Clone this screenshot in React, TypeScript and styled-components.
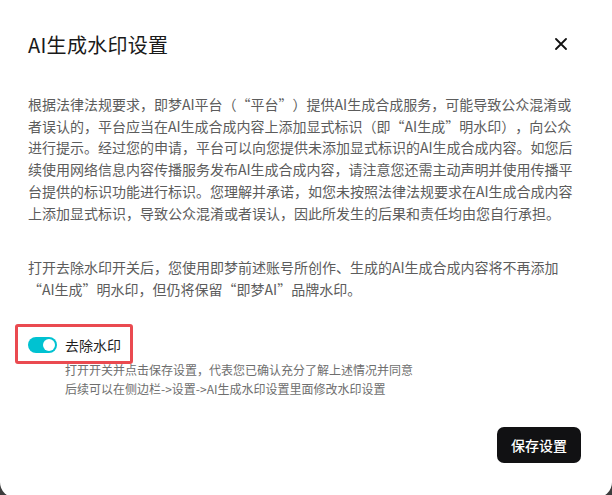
import React, { useState } from "react";
import styled, { createGlobalStyle } from "styled-components";

const GlobalStyle = createGlobalStyle`
  html, body {
    margin: 0;
    padding: 0;
    background: #3c3c3c;
  }
  body {
    font-family: "Noto Sans CJK SC", "Liberation Sans", sans-serif;
    text-spacing-trim: space-all;
  }
`;

const Dialog = styled.div`
  width: 612px;
  height: 498px;
  box-sizing: border-box;
  background: #fff;
  border-radius: 0 0 16px 16px;
  padding: 24px 28px 0 28px;
  display: flex;
  flex-direction: column;
`;

const Header = styled.div`
  display: flex;
  align-items: center;
  justify-content: space-between;
  height: 40px;
`;

const Title = styled.h1`
  margin: 0;
  font-size: 20px;
  font-weight: 400;
  color: #1a1a1a;
  letter-spacing: 0.3px;
`;

const CloseButton = styled.button`
  border: none;
  background: transparent;
  padding: 0;
  width: 24px;
  height: 24px;
  margin-right: 11px;
  display: flex;
  align-items: center;
  justify-content: center;
  cursor: pointer;
  color: #111;
`;

const Body = styled.div`
  margin-top: 30px;
  display: flex;
  flex-direction: column;
  gap: 33px;
`;

const Paragraph = styled.p`
  margin: 0;
  font-size: 14px;
  line-height: 21.7px;
  color: #5c5c5c;
  white-space: nowrap;
`;

const ToggleSection = styled.div`
  margin-top: 32px;
  display: flex;
  flex-direction: column;
`;

const Highlight = styled.div`
  position: relative;
  display: flex;
  align-items: center;
  gap: 8px;
  height: 24px;
`;

const HighlightFrame = styled.div`
  position: absolute;
  left: -13px;
  top: -9px;
  width: 118px;
  height: 40px;
  box-sizing: border-box;
  border: 3px solid #ea4a50;
  border-radius: 3px;
  pointer-events: none;
`;

const Switch = styled.button<{ $on: boolean }>`
  position: relative;
  width: 29px;
  height: 16px;
  border: none;
  padding: 0;
  border-radius: 8px;
  background: ${(p) => (p.$on ? "#00c2d1" : "#c9c9c9")};
  cursor: pointer;
`;

const Knob = styled.span<{ $on: boolean }>`
  position: absolute;
  top: 2px;
  left: ${(p) => (p.$on ? "15px" : "2px")};
  width: 12px;
  height: 12px;
  border-radius: 50%;
  background: #fff;
`;

const SwitchLabel = styled.span`
  font-size: 14px;
  color: #1f1f1f;
`;

const Hint = styled.div`
  margin-left: 37px;
  margin-top: 3px;
  font-size: 12px;
  line-height: 19px;
  color: #6e6e6e;
  white-space: nowrap;
`;

const Footer = styled.div`
  margin-top: auto;
  margin-bottom: 35px;
  display: flex;
  justify-content: flex-end;
  padding-right: 3px;
`;

const SaveButton = styled.button`
  width: 84px;
  height: 36px;
  border: none;
  border-radius: 7px;
  background: #111113;
  color: #fff;
  font-family: "Noto Sans CJK SC", sans-serif;
  font-size: 14px;
  font-weight: 500;
  cursor: pointer;
`;

export default function App() {
  const [on, setOn] = useState(true);

  return (
    <>
      <GlobalStyle />
      <Dialog>
        <Header>
          <Title>AI生成水印设置</Title>
          <CloseButton aria-label="关闭">
            <svg width="12" height="12" viewBox="0 0 12 12">
              <path d="M1 1 L11 11 M11 1 L1 11" stroke="currentColor" strokeWidth="1.8" strokeLinecap="round" />
            </svg>
          </CloseButton>
        </Header>
        <Body>
          <Paragraph>
            根据法律法规要求，即梦AI平台（“平台”）提供AI生成合成服务，可能导致公众混淆或
            <br />
            者误认的，平台应当在AI生成合成内容上添加显式标识（即“AI生成”明水印），向公众
            <br />
            进行提示。经过您的申请，平台可以向您提供未添加显式标识的AI生成合成内容。如您后
            <br />
            续使用网络信息内容传播服务发布AI生成合成内容，请注意您还需主动声明并使用传播平
            <br />
            台提供的标识功能进行标识。您理解并承诺，如您未按照法律法规要求在AI生成合成内容
            <br />
            上添加显式标识，导致公众混淆或者误认，因此所发生的后果和责任均由您自行承担。
          </Paragraph>
          <Paragraph>
            打开去除水印开关后，您使用即梦前述账号所创作、生成的AI生成合成内容将不再添加
            <br />
            “AI生成”明水印，但仍将保留“即梦AI”品牌水印。
          </Paragraph>
        </Body>
        <ToggleSection>
          <Highlight>
            <HighlightFrame />
            <Switch $on={on} onClick={() => setOn(!on)} aria-pressed={on}>
              <Knob $on={on} />
            </Switch>
            <SwitchLabel>去除水印</SwitchLabel>
          </Highlight>
          <Hint>
            打开开关并点击保存设置，代表您已确认充分了解上述情况并同意
            <br />
            后续可以在侧边栏-&gt;设置-&gt;AI生成水印设置里面修改水印设置
          </Hint>
        </ToggleSection>
        <Footer>
          <SaveButton>保存设置</SaveButton>
        </Footer>
      </Dialog>
    </>
  );
}
